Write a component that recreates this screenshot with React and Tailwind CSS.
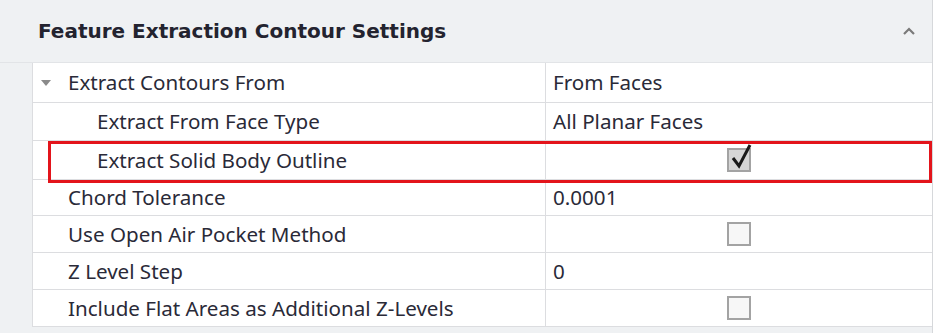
const rows = [
  { label: "Extract Contours From", value: "From Faces", expander: true, h: "h-[40px]" },
  { label: "Extract From Face Type", value: "All Planar Faces", indent: true, h: "h-[38px]" },
  { label: "Extract Solid Body Outline", check: true, checked: true, indent: true, h: "h-[39px]" },
  { label: "Chord Tolerance", value: "0.0001", h: "h-[36px]" },
  { label: "Use Open Air Pocket Method", check: true, h: "h-[37px]" },
  { label: "Z Level Step", value: "0", h: "h-[37px]" },
  { label: "Include Flat Areas as Additional Z-Levels", check: true, h: "h-[37px]" },
];

function CheckBox({ checked }) {
  return (
    <div className="relative w-[24px] h-[24px] border-2 border-[#a3a3a3] bg-[#f7f7f7]">
      {checked && (
        <>
          <div className="absolute inset-0 bg-[#d6d6d6]" />
          <svg
            className="absolute left-[1px] top-[-7px]"
            width="24"
            height="27"
            viewBox="0 0 24 27"
          >
            <path d="M3 15 L9 23 L20 2" fill="none" stroke="#1a1a1a" strokeWidth="3" />
          </svg>
        </>
      )}
    </div>
  );
}

export default function App() {
  return (
    <div
      className="w-[940px] h-[333px] bg-white flex text-[#2a2a38]"
      style={{ fontFamily: "'Noto Sans', 'Open Sans', sans-serif" }}
    >
      <div className="relative w-[933px] h-full bg-[#eff1f3] border-r border-[#d6d8db] flex flex-col">
        <div className="h-[63px] flex items-center justify-between pl-[38px] pr-[16px] border-b border-[#e2e4e7]">
          <span
            className="text-[20px] font-bold text-[#23232f]"
            style={{ fontFamily: "'DejaVu Sans', sans-serif" }}
          >
            Feature Extraction Contour Settings
          </span>
          <svg width="14" height="10" viewBox="0 0 14 10">
            <path d="M2 8 L7 3 L12 8" fill="none" stroke="#7a7a7a" strokeWidth="2.2" />
          </svg>
        </div>

        <div className="ml-[32px] bg-white border-l border-[#dcdde0]">
          {rows.map((r) => (
            <div key={r.label} className={`flex ${r.h} border-b border-[#dcdde0]`}>
              <div className="w-[513px] shrink-0 flex items-center border-r border-[#dcdde0] relative text-[20.6px]">
                {r.expander && (
                  <svg className="absolute left-[8px]" width="10" height="6" viewBox="0 0 10 6">
                    <path d="M0 0 L10 0 L5 6 Z" fill="#8a8a8a" />
                  </svg>
                )}
                <span className={r.indent ? "pl-[64px]" : "pl-[35px]"}>{r.label}</span>
              </div>
              <div className="flex-1 flex items-center text-[20.6px]">
                {r.check ? (
                  <div className="flex-1 flex justify-center">
                    <CheckBox checked={r.checked} />
                  </div>
                ) : (
                  <span className="pl-[7px]">{r.value}</span>
                )}
              </div>
            </div>
          ))}
        </div>

        <div className="absolute left-[48px] top-[141px] w-[884px] h-[42px] border-[3px] border-[#e3141b]" />
      </div>
    </div>
  );
}
